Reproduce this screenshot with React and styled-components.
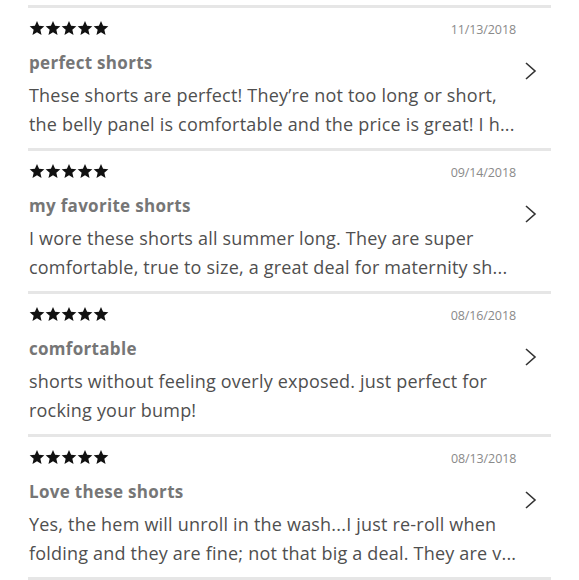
import React from "react";
import styled, { createGlobalStyle } from "styled-components";

const Global = createGlobalStyle`
  html, body { margin: 0; padding: 0; background: #fff; }
  body { font-family: "Open Sans", "Liberation Sans", sans-serif; }
`;

const List = styled.div`
  width: 523px;
  margin-left: 28px;
  padding-top: 5px;
`;

const Item = styled.div`
  display: grid;
  grid-template-columns: 1fr 35px;
  grid-template-rows: auto auto auto;
  border-top: 3px solid #e6e6e6;
  padding: 8px 0 9px 1px;
  &:last-child { border-bottom: 3px solid #e6e6e6; }
`;

const Header = styled.div`
  height: 24px;
  display: flex;
  align-items: center;
  justify-content: space-between;
`;

const Stars = styled.div`
  display: flex;
`;

const DateText = styled.span`
  font-size: 12.5px;
  color: #8a8a8a;
  letter-spacing: -0.1px;
  padding-top: 3px;
`;

const Title = styled.div`
  margin-top: 9px;
  height: 28px;
  font-size: 17px;
  line-height: 28px;
  font-weight: 700;
  color: #767676;
  letter-spacing: 0.3px;
`;

const Body = styled.div`
  grid-column: 1;
  margin-top: 4px;
  height: 58px;
  font-size: 18px;
  line-height: 29px;
  color: #4f4f4f;
  letter-spacing: 0.2px;
`;

const Line = styled.div`
  white-space: nowrap;
`;

const Chevron = styled.div`
  grid-column: 2;
  grid-row: 1 / 4;
  display: flex;
  align-items: center;
  padding-left: 8px;
  padding-bottom: 14px;
`;

const Star = () => (
  <svg width="16" height="16" viewBox="0 0 24 24">
    <path
      fill="#111"
      d="M12 1.5l3.1 7.3 7.9.7-6 5.2 1.8 7.8L12 18.4l-6.8 4.1L7 14.7 1 9.5l7.9-.7z"
    />
  </svg>
);

const reviews = [
  {
    date: "11/13/2018",
    title: "perfect shorts",
    lines: [
      "These shorts are perfect! They\u2019re not too long or short,",
      "the belly panel is comfortable and the price is great! I h...",
    ],
  },
  {
    date: "09/14/2018",
    title: "my favorite shorts",
    lines: [
      "I wore these shorts all summer long. They are super",
      "comfortable, true to size, a great deal for maternity sh...",
    ],
  },
  {
    date: "08/16/2018",
    title: "comfortable",
    lines: ["shorts without feeling overly exposed. just perfect for", "rocking your bump!"],
  },
  {
    date: "08/13/2018",
    title: "Love these shorts",
    lines: [
      "Yes, the hem will unroll in the wash...I just re-roll when",
      "folding and they are fine; not that big a deal. They are v...",
    ],
  },
];

export default function App() {
  return (
    <>
      <Global />
      <List>
        {reviews.map((r) => (
          <Item key={r.date}>
            <Header>
              <Stars>
                {[0, 1, 2, 3, 4].map((i) => (
                  <Star key={i} />
                ))}
              </Stars>
              <DateText>{r.date}</DateText>
            </Header>
            <Title>{r.title}</Title>
            <Body>
              {r.lines.map((l) => (
                <Line key={l}>{l}</Line>
              ))}
            </Body>
            <Chevron>
              <svg width="14" height="20" viewBox="0 0 14 20">
                <path d="M2 2l9 8-9 8" fill="none" stroke="#333" strokeWidth="1.6" />
              </svg>
            </Chevron>
          </Item>
        ))}
      </List>
    </>
  );
}
